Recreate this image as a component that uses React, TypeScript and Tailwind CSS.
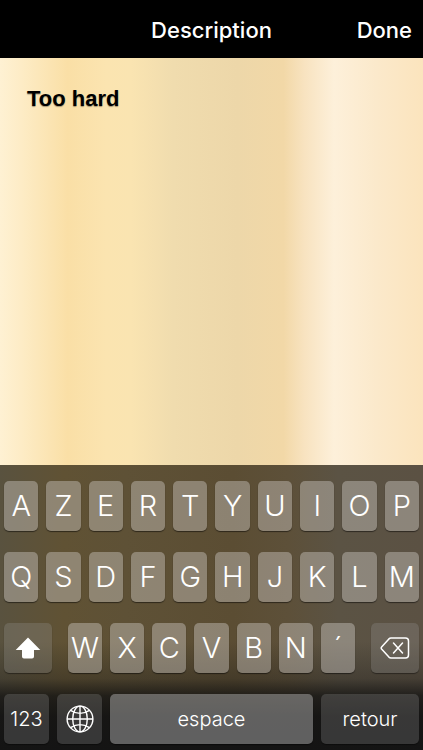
import type { ReactNode } from 'react'

const topRow = ['A', 'Z', 'E', 'R', 'T', 'Y', 'U', 'I', 'O', 'P']
const middleRow = ['Q', 'S', 'D', 'F', 'G', 'H', 'J', 'K', 'L', 'M']
const bottomRow = ['W', 'X', 'C', 'V', 'B', 'N', '´']

function LetterKey({ letter }: { letter: string }) {
    return (
        <button
            type="button"
            className="flex h-[50px] min-w-0 flex-1 items-center justify-center rounded-[5px] bg-[#d2cec8]/42 text-[29px] font-light shadow-[0_1px_1px_rgba(0,0,0,0.5)]"
        >
            {letter}
        </button>
    )
}

function DarkKey({ label, className, children }: { label?: string; className: string; children: ReactNode }) {
    return (
        <button
            type="button"
            aria-label={label}
            className={`flex h-[50px] items-center justify-center rounded-[5px] bg-[#a0a0a0]/25 text-xl font-light shadow-[0_1px_1px_rgba(0,0,0,0.4)] ${className}`}
        >
            {children}
        </button>
    )
}

function ShiftIcon() {
    return (
        <svg width="26" height="22" viewBox="0 0 26 22" fill="currentColor" aria-hidden="true">
            <path d="M13 0.5 L25.3 13 H19 V19.5 Q19 21.5 17 21.5 H9 Q7 21.5 7 19.5 V13 H0.7 Z" />
        </svg>
    )
}

function GlobeIcon() {
    return (
        <svg width="28" height="28" viewBox="0 0 28 28" fill="none" stroke="currentColor" strokeWidth="1.4" aria-hidden="true">
            <circle cx="14" cy="14" r="12.9" />
            <ellipse cx="14" cy="14" rx="7.3" ry="12.9" />
            <path d="M14 1V27M1 14H27M4.5 5.300Q14 11.500 23.5 5.300M4.5 22.700Q14 16.500 23.5 22.700" />
        </svg>
    )
}

function DeleteIcon() {
    return (
        <svg width="30" height="22" viewBox="0 0 30 22" fill="none" stroke="currentColor" strokeWidth="1.5" strokeLinejoin="round" strokeLinecap="round" aria-hidden="true">
            <path d="M11 1H25.500Q28.500 1 28.500 4V18Q28.500 21 25.500 21H11Q9.800 21 8.900 20.100L1.600 12Q0.800 11 1.600 10L8.900 1.900Q9.800 1 11 1Z" />
            <path d="M13.500 6L22.500 16M22.500 6L13.500 16" />
        </svg>
    )
}

function Keyboard() {
    return (
        <div className="bg-[linear-gradient(90deg,#59523f_0%,#605234_15%,#5e5136_30%,#5b4d33_55%,#5d5039_68%,#5b5344_80%,#5b5143_100%)] text-white">
            <div className="flex flex-col gap-[21px] bg-[linear-gradient(180deg,transparent_0%,transparent_62%,rgba(18,18,18,0.3)_75%,rgba(18,18,18,0.8)_81%,rgba(18,18,18,0.94)_88%,#141414_100%)] px-1 pt-4 pb-1.5">
                <div className="flex gap-2">
                    {topRow.map((letter) => <LetterKey key={letter} letter={letter} />)}
                </div>
                <div className="flex gap-2">
                    {middleRow.map((letter) => <LetterKey key={letter} letter={letter} />)}
                </div>
                <div className="flex gap-4">
                    <DarkKey label="Shift" className="w-12"><ShiftIcon /></DarkKey>
                    <div className="flex flex-1 gap-2">
                        {bottomRow.map((letter) => <LetterKey key={letter} letter={letter} />)}
                    </div>
                    <DarkKey label="Delete" className="w-12"><DeleteIcon /></DarkKey>
                </div>
                <div className="flex gap-2">
                    <DarkKey className="w-[45px]">123</DarkKey>
                    <DarkKey label="Next keyboard" className="w-[45px]"><GlobeIcon /></DarkKey>
                    <button type="button" className="h-[50px] flex-1 rounded-[5px] bg-[#d2d2d2]/40 text-xl font-light shadow-[0_1px_1px_rgba(0,0,0,0.5)]">
                        espace
                    </button>
                    <DarkKey className="w-[98px]">retour</DarkKey>
                </div>
            </div>
        </div>
    )
}

export default function App() {
    return (
        <div className="flex min-h-screen flex-col font-['Inter','Liberation_Sans',sans-serif]">
            <header className="grid h-[58px] grid-cols-3 items-center bg-black px-[11px] pt-0.5 text-[22px] font-medium text-white">
                <h1 className="col-start-2 text-center">Description</h1>
                <button type="button" className="justify-self-end">Done</button>
            </header>
            <main className="flex flex-1 flex-col bg-[linear-gradient(90deg,#fef1d3_0%,#fdecc6_5%,#fadfa6_16%,#fbe4b0_25%,#fae4b1_31%,#f0dcae_41%,#edd7a9_56%,#f2d8a7_67%,#f8e3c0_72%,#fdf0da_79%,#fbe9cb_89%,#fbe4bd_100%)]">
                <textarea
                    aria-label="Description"
                    defaultValue="Too hard"
                    className="w-full flex-1 resize-none bg-transparent px-[27px] pt-7 font-['Liberation_Sans',sans-serif] text-[22px] leading-[26px] font-bold text-black outline-none [text-shadow:0_1px_1px_rgba(0,0,0,0.35)]"
                />
            </main>
            <Keyboard />
        </div>
    )
}
